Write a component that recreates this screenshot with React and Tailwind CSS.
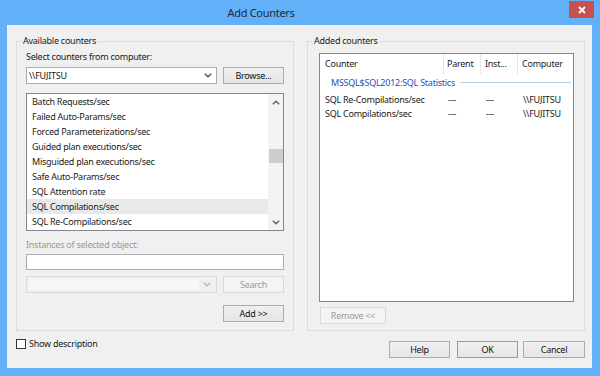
import React from 'react'

const font = { fontFamily: '"Noto Sans", "Open Sans", sans-serif' }

const Chevron = ({ up = false, color = '#555' }) => (
  <svg width="8" height="5" viewBox="0 0 8 5" className="block">
    <polyline
      points={up ? '0.8,4.3 4,1.2 7.2,4.3' : '0.8,0.7 4,3.8 7.2,0.7'}
      fill="none"
      stroke={color}
      strokeWidth="1.4"
    />
  </svg>
)

const Button = ({ children, className = '', disabled = false, primary = false }) => (
  <div
    className={
      'h-[17px] flex items-center justify-center border text-[9px] leading-none ' +
      (disabled
        ? 'border-[#d9d9d9] bg-[#f4f4f4] text-[#9a9a9a] '
        : primary
          ? 'border-[#5fa8f0] bg-linear-to-b from-[#f0f0f0] to-[#e5e5e5] text-[#111] '
          : 'border-[#acacac] bg-linear-to-b from-[#f0f0f0] to-[#e5e5e5] text-[#111] ') +
      className
    }
  >
    {children}
  </div>
)

const counters = [
  'Batch Requests/sec',
  'Failed Auto-Params/sec',
  'Forced Parameterizations/sec',
  'Guided plan executions/sec',
  'Misguided plan executions/sec',
  'Safe Auto-Params/sec',
  'SQL Attention rate',
  'SQL Compilations/sec',
  'SQL Re-Compilations/sec',
]

const added = ['SQL Re-Compilations/sec', 'SQL Compilations/sec']

export default function App() {
  return (
    <div className="w-[600px] h-[376px] bg-[#62b1f8] flex flex-col text-[#1a1a1a] tracking-[-0.25px]" style={font}>
      {/* Title bar */}
      <div className="h-[25px] relative flex justify-center">
        <span className="mt-[6px] mr-[78px] text-[11px] leading-[14px] tracking-[-0.3px] text-[#1e2a38]">Add Counters</span>
        <div className="absolute right-[6px] top-[1px] w-[25px] h-[17px] bg-[#c75050] flex items-center justify-center">
          <svg width="8" height="8" viewBox="0 0 8 8">
            <path d="M1 1 L7 7 M7 1 L1 7" stroke="#fff" strokeWidth="1.8" />
          </svg>
        </div>
      </div>

      {/* Client area */}
      <div className="ml-[7px] w-[585px] h-[343px] bg-[#f0f0f0] pt-[10px] pl-[9px] pr-[7px] flex flex-col">
        <div className="flex gap-[13px]">
          {/* Available counters */}
          <fieldset className="w-[278px] h-[296px] border border-[#dcdcdc]">
            <legend className="ml-[5px] px-[1px] text-[9px] leading-[12px]">Available counters</legend>
            <div className="px-[9px] flex flex-col">
              <div className="mt-[4px] text-[9px] leading-[12px]">Select counters from computer:</div>
              <div className="mt-[4px] flex gap-[6px]">
                <div className="w-[191px] h-[17px] border border-[#abadb3] bg-white flex items-center justify-between pl-[2px] pr-[4px] text-[9px]">
                  <span>\\FUJITSU</span>
                  <Chevron />
                </div>
                <Button className="w-[61px]">Browse...</Button>
              </div>

              <div className="mt-[9px] h-[138px] border border-[#828790] bg-white flex">
                <div className="flex-1">
                  {counters.map((c, i) => (
                    <div
                      key={c}
                      className={
                        'h-[15px] pl-[5px] flex items-center text-[9px] ' +
                        (i === 7 ? 'bg-[#e9e9e9]' : '')
                      }
                    >
                      {c}
                    </div>
                  ))}
                </div>
                <div className="w-[15px] bg-[#f3f3f3] flex flex-col items-center">
                  <div className="h-[16px] flex items-center justify-center">
                    <Chevron up color="#606060" />
                  </div>
                  <div className="mt-[39px] w-[14px] h-[14px] bg-[#cdcdcd]" />
                  <div className="flex-1" />
                  <div className="h-[16px] flex items-center justify-center">
                    <Chevron color="#606060" />
                  </div>
                </div>
              </div>

              <div className="mt-[8px] text-[9px] leading-[12px] text-[#9a9a9a]">Instances of selected object:</div>
              <div className="mt-[3px] h-[16px] border border-[#abadb3] bg-white" />
              <div className="mt-[6px] flex gap-[6px]">
                <div className="w-[191px] h-[17px] border border-[#d9d9d9] bg-[#f0f0f0] flex items-center p-[2px] pr-[5px]">
                  <div className="flex-1 h-full bg-[#f7f7f7]" />
                  <div className="ml-[4px]">
                    <Chevron color="#b4b4b4" />
                  </div>
                </div>
                <Button disabled className="w-[61px]">Search</Button>
              </div>
              <div className="mt-[12px] flex justify-end">
                <Button className="w-[61px]">Add &gt;&gt;</Button>
              </div>
            </div>
          </fieldset>

          {/* Added counters */}
          <fieldset className="w-[278px] h-[296px] border border-[#dcdcdc]">
            <legend className="ml-[5px] px-[1px] text-[9px] leading-[12px]">Added counters</legend>
            <div className="pl-[11px] flex flex-col">
              <div className="mt-[6px] w-[255px] h-[249px] border border-[#828790] bg-white flex flex-col text-[9px]">
                <div className="h-[20px] flex">
                  <div className="w-[124px] pl-[5px] flex items-center border-r border-[#e5e5e5]">Counter</div>
                  <div className="w-[37px] pl-[3px] flex items-center border-r border-[#e5e5e5]">Parent</div>
                  <div className="w-[37px] pl-[4px] flex items-center border-r border-[#e5e5e5]">Inst...</div>
                  <div className="flex-1 pl-[4px] flex items-center">Computer</div>
                </div>
                <div className="h-[17px] flex items-center pl-[11px] pr-[2px]">
                  <span className="text-[#2a4fb5]">MSSQL$SQL2012:SQL Statistics</span>
                  <div className="flex-1 ml-[5px] h-px bg-[#b7cbeb]" />
                </div>
                <div className="mt-[2px]">
                  {added.map((a) => (
                    <div key={a} className="h-[14px] flex items-center">
                      <div className="w-[125px] pl-[5px]">{a}</div>
                      <div className="w-[37px] pl-[3px]">---</div>
                      <div className="w-[37px] pl-[4px]">---</div>
                      <div className="flex-1 pl-[4px]">\\FUJITSU</div>
                    </div>
                  ))}
                </div>
              </div>
              <div className="mt-[5px] ml-[1px]">
                <Button disabled className="w-[66px]">Remove &lt;&lt;</Button>
              </div>
            </div>
          </fieldset>
        </div>

        {/* Bottom row */}
        <div className="mt-[10px] flex items-start">
          <div className="-mt-[3px] h-[12px] flex items-center">
            <div className="w-[10px] h-[10px] border border-[#333] bg-white" />
            <span className="ml-[3px] text-[9px]">Show description</span>
          </div>
          <div className="flex-1" />
          <Button className="w-[61px]">Help</Button>
          <Button primary className="ml-[7px] w-[61px]">OK</Button>
          <Button className="ml-[5px] w-[62px]">Cancel</Button>
        </div>
      </div>
    </div>
  )
}
